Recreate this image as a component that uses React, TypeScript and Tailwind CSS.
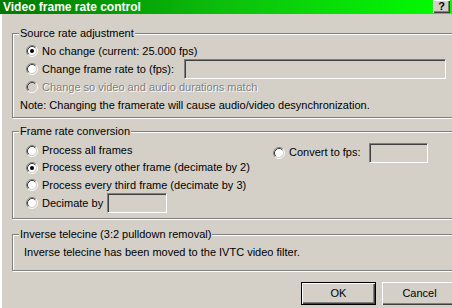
import React from "react";

function Radio({ checked = false, disabled = false }: { checked?: boolean; disabled?: boolean }) {
  return (
    <svg width="12" height="12" viewBox="0 0 12 12" className="shrink-0">
      <circle cx="6" cy="6" r="4.2" fill={disabled ? "#d4d0c8" : "#ffffff"} />
      <path d="M2.11 9.89 A5.5 5.5 0 0 1 9.89 2.11" fill="none" stroke="#808080" strokeWidth="1" />
      <path d="M9.89 2.11 A5.5 5.5 0 0 1 2.11 9.89" fill="none" stroke="#ffffff" strokeWidth="1" />
      <path d="M2.82 9.18 A4.5 4.5 0 0 1 9.18 2.82" fill="none" stroke="#404040" strokeWidth="1" />
      <path d="M9.18 2.82 A4.5 4.5 0 0 1 2.82 9.18" fill="none" stroke="#d4d0c8" strokeWidth="1" />
      {checked && <circle cx="6" cy="6" r="2" fill="#000000" />}
    </svg>
  );
}

function Field({ className = "" }: { className?: string }) {
  return (
    <div
      className={`shrink-0 bg-[#d4d0c8] border border-t-[#808080] border-l-[#808080] border-b-white border-r-white shadow-[inset_1px_1px_0_#404040,inset_-1px_-1px_0_#d4d0c8] ${className}`}
    />
  );
}

function Group({ label, className = "", children }: { label: string; className?: string; children?: React.ReactNode }) {
  return (
    <div
      className={`relative ml-[12px] w-[450px] shrink-0 border border-[#808080] shadow-[inset_1px_1px_0_#fff,1px_1px_0_#fff] ${className}`}
    >
      <span className="absolute left-[6px] top-[-7px] bg-[#d4d0c8] px-[1px] leading-[13px] whitespace-nowrap">{label}</span>
      {children}
    </div>
  );
}

export default function App() {
  return (
    <div className="w-[452px] h-[308px] overflow-hidden bg-[#d4d0c8] flex flex-col font-['Liberation_Sans',Arial,sans-serif] text-[11px] text-black shadow-[inset_2px_0_0_#fff,inset_1px_0_0_#d4d0c8]">
      {/* Title bar */}
      <div className="h-[14px] shrink-0 flex items-center justify-between bg-gradient-to-r from-[#007a00] via-[#0cc00c] to-[#00ff00] pl-[3px] pr-[2px]">
        <span className="text-white font-bold text-[12px] leading-[14px] whitespace-nowrap">Video frame rate control</span>
        <div className="w-[17px] h-[13px] self-start bg-[#d4d0c8] shadow-[inset_1px_1px_0_#fff,inset_-1px_-1px_0_#404040,inset_-2px_-2px_0_#808080] flex items-center justify-center font-bold text-[11px] leading-none">
          ?
        </div>
      </div>

      {/* Source rate adjustment */}
      <Group label="Source rate adjustment" className="mt-[19px] h-[85px]">
        <div className="flex flex-col pt-[8px] pl-[13px]">
          <div className="flex items-center h-[18px] gap-[4px]">
            <Radio checked />
            <span className="whitespace-nowrap">No change (current: 25.000 fps)</span>
          </div>
          <div className="flex items-center h-[18px] gap-[4px]">
            <Radio />
            <span className="w-[138px] whitespace-nowrap">Change frame rate to (fps):</span>
            <Field className="w-[262px] h-[20px]" />
          </div>
          <div className="flex items-center h-[18px] gap-[4px]">
            <Radio disabled />
            <span className="whitespace-nowrap text-[#808080] [text-shadow:1px_1px_0_#fff]">
              Change so video and audio durations match
            </span>
          </div>
          <div className="flex items-center h-[18px] -ml-[6px]">
            <span className="whitespace-nowrap">Note: Changing the framerate will cause audio/video desynchronization.</span>
          </div>
        </div>
      </Group>

      {/* Frame rate conversion */}
      <Group label="Frame rate conversion" className="mt-[13px] h-[88px]">
        <div className="flex pl-[13px]">
          <div className="flex flex-col pt-[10px] w-[247px]">
            <div className="flex items-center h-[17px] gap-[4px]">
              <Radio />
              <span className="whitespace-nowrap">Process all frames</span>
            </div>
            <div className="flex items-center h-[17px] gap-[4px]">
              <Radio checked />
              <span className="whitespace-nowrap">Process every other frame (decimate by 2)</span>
            </div>
            <div className="flex items-center h-[18px] gap-[4px]">
              <Radio />
              <span className="whitespace-nowrap">Process every third frame (decimate by 3)</span>
            </div>
            <div className="flex items-center h-[18px] gap-[4px]">
              <Radio />
              <span className="w-[61px] whitespace-nowrap">Decimate by</span>
              <Field className="w-[60px] h-[20px]" />
            </div>
          </div>
          <div className="flex flex-col pt-[12px]">
            <div className="flex items-center h-[17px] gap-[4px]">
              <Radio />
              <span className="w-[76px] whitespace-nowrap">Convert to fps:</span>
              <Field className="w-[59px] h-[20px]" />
            </div>
          </div>
        </div>
      </Group>

      {/* Inverse telecine */}
      <Group label="Inverse telecine (3:2 pulldown removal)" className="mt-[15px] h-[37px]">
        <div className="pt-[8px] pl-[11px] flex items-center h-[26px]">
          <span className="whitespace-nowrap">Inverse telecine has been moved to the IVTC video filter.</span>
        </div>
      </Group>

      {/* Buttons */}
      <div className="mt-[11px] flex pl-[301px] gap-[6px] shrink-0">
        <button className="w-[75px] h-[23px] shrink-0 bg-[#d4d0c8] border border-black shadow-[inset_1px_1px_0_#fff,inset_-1px_-1px_0_#404040,inset_-2px_-2px_0_#808080] text-[11px]">
          OK
        </button>
        <button className="w-[75px] h-[23px] shrink-0 bg-[#d4d0c8] shadow-[inset_1px_1px_0_#fff,inset_-1px_-1px_0_#404040,inset_-2px_-2px_0_#808080] text-[11px]">
          Cancel
        </button>
      </div>
    </div>
  );
}
